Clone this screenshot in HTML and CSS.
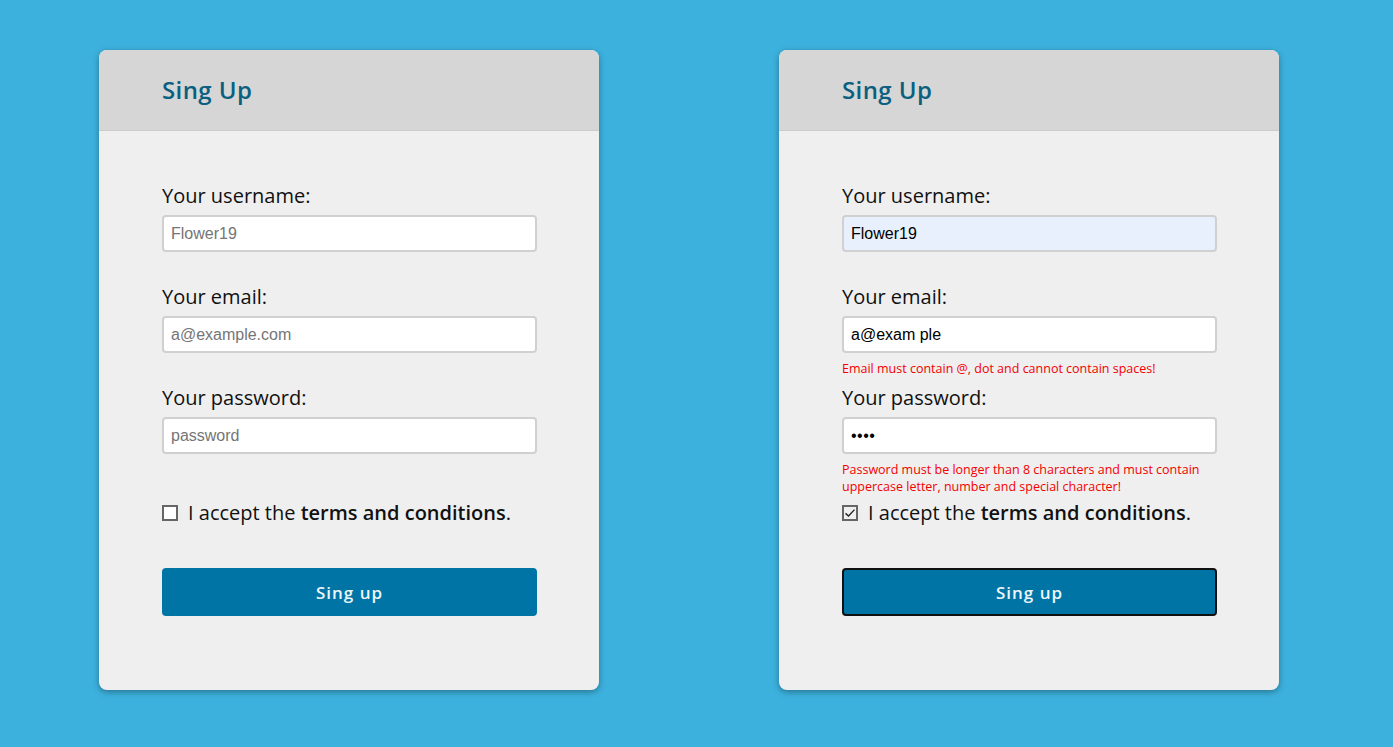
FILE: index.html
```html
<!DOCTYPE html>
<html lang="en">
<head>
<meta charset="utf-8">
<title>Sing Up</title>
<link rel="stylesheet" href="styles.css">
</head>
<body>
<main class="page">
  <section class="card">
    <header class="card-head"><h1 class="title">Sing Up</h1></header>
    <form class="card-body">
      <div class="field">
        <label class="label">Your username:</label>
        <input class="input" type="text" placeholder="Flower19">
        <div class="err"></div>
      </div>
      <div class="field">
        <label class="label">Your email:</label>
        <input class="input" type="text" placeholder="a@example.com">
        <div class="err"></div>
      </div>
      <div class="field">
        <label class="label">Your password:</label>
        <input class="input" type="password" placeholder="password">
        <div class="err err-tall"></div>
      </div>
      <div class="check-row">
        <span class="box"></span>
        <span class="check-text">I accept the <b>terms and conditions</b>.</span>
      </div>
      <button class="btn" type="button">Sing up</button>
    </form>
  </section>

  <section class="card">
    <header class="card-head"><h1 class="title">Sing Up</h1></header>
    <form class="card-body">
      <div class="field">
        <label class="label">Your username:</label>
        <input class="input input-auto" type="text" value="Flower19">
        <div class="err"></div>
      </div>
      <div class="field">
        <label class="label">Your email:</label>
        <input class="input" type="text" value="a@exam ple">
        <div class="err">Email must contain @, dot and cannot contain spaces!</div>
      </div>
      <div class="field">
        <label class="label">Your password:</label>
        <input class="input input-pw" type="password" value="abcd">
        <div class="err err-tall">Password must be longer than 8 characters and must contain uppercase letter, number and special character!</div>
      </div>
      <div class="check-row">
        <span class="box box-checked">
          <svg viewBox="0 0 16 16" width="12" height="12"><path d="M2 8.5 L6 12 L14 3.5" fill="none" stroke="#222" stroke-width="1.8"/></svg>
        </span>
        <span class="check-text">I accept the <b>terms and conditions</b>.</span>
      </div>
      <button class="btn btn-focus" type="button">Sing up</button>
    </form>
  </section>
</main>
</body>
</html>
```

FILE: styles.css
```css
* { box-sizing: border-box; }
html, body { margin: 0; padding: 0; }
body {
  background: #3cb1dd;
  font-family: "Open Sans", "Noto Sans", sans-serif;
  width: 1393px;
  height: 747px;
  overflow: hidden;
}
.page {
  display: flex;
  gap: 180px;
  padding: 50px 0 0 99px;
}
.card {
  width: 500px;
  height: 640px;
  background: #efefef;
  border-radius: 8px;
  box-shadow: 0 2px 6px rgba(0, 0, 0, 0.35);
  overflow: hidden;
}
.card-head {
  height: 81px;
  background: #d6d6d6;
  border-bottom: 1px solid #cbcbcb;
  padding-left: 63px;
  display: flex;
  align-items: center;
}
.title {
  margin: 0;
  font-size: 24px;
  font-weight: 600;
  color: #0b5f80;
  letter-spacing: 0.4px;
  line-height: 1;
  padding-bottom: 1px;
}
.card-body {
  padding: 51px 62px 0 63px;
  display: flex;
  flex-direction: column;
}
.field { display: flex; flex-direction: column; }
.label {
  font-size: 20px;
  line-height: 27px;
  color: #111;
  margin-bottom: 6px;
}
.input {
  width: 375px;
  height: 37px;
  border: 2px solid #d0d0d0;
  border-radius: 4px;
  background: #fff;
  padding: 0 7px;
  font-family: "Liberation Sans", Arial, sans-serif;
  font-size: 16px;
  color: #000;
  outline: none;
}
.input::placeholder { color: #757575; }
.input-auto { background: #e8f0fe; }
.input-pw { letter-spacing: 0.5px; }
.err {
  height: 31px;
  padding-top: 7px;
  font-size: 12.5px;
  line-height: 17px;
  color: #f40000;
}
.err-tall { height: 45px; }
.check-row {
  display: flex;
  align-items: center;
  gap: 10px;
  height: 27px;
}
.box {
  width: 16px;
  height: 16px;
  border: 2px solid #666;
  background: #fff;
  display: flex;
  align-items: center;
  justify-content: center;
  margin-top: 1px;
}
.box-checked { background: #f0f0f0; }
.check-text {
  font-size: 20px;
  line-height: 27px;
  color: #111;
}
.check-text b { font-weight: 600; }
.btn {
  margin-top: 42px;
  width: 375px;
  height: 48px;
  border: none;
  border-radius: 4px;
  background: #0075a5;
  color: #eef6fa;
  font-family: "Open Sans", "Noto Sans", sans-serif;
  font-size: 17px;
  font-weight: 600;
  letter-spacing: 1px;
  padding: 0;
}
.btn-focus { border: 2px solid #111; }
```
